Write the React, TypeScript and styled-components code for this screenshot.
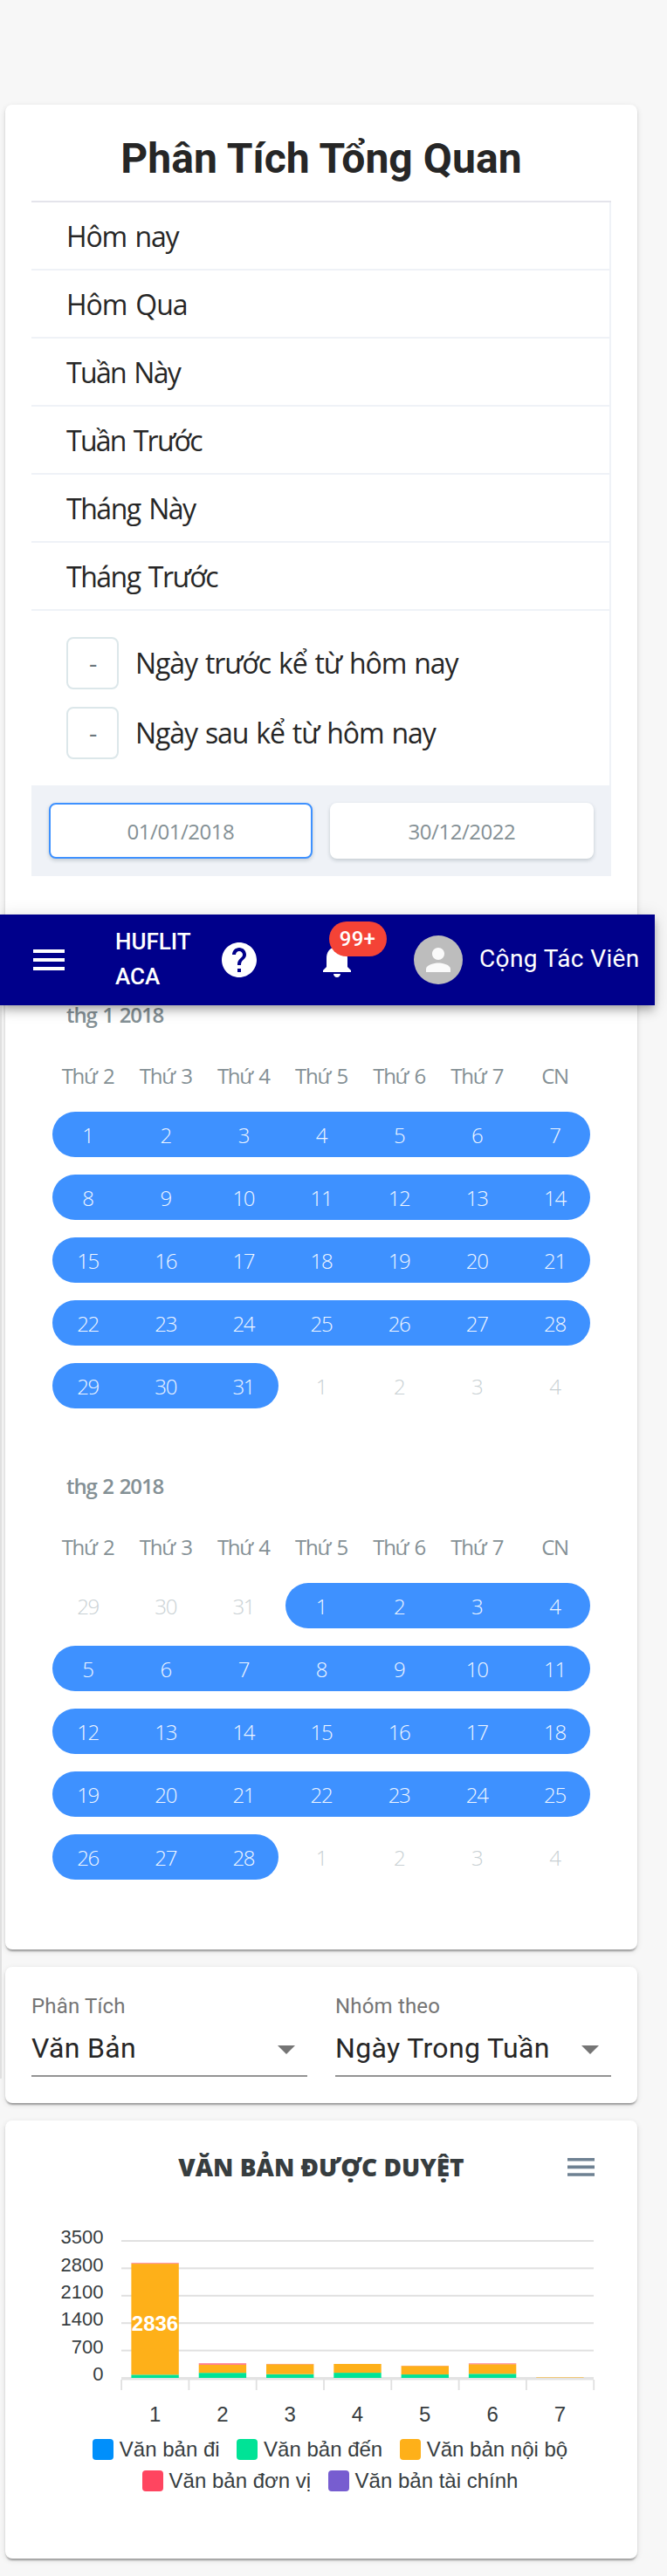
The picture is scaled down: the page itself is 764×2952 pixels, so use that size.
import React from 'react';
import styled, { createGlobalStyle } from 'styled-components';

const Global = createGlobalStyle`
  * { box-sizing: border-box; }
  body { margin: 0; background: #f7f7f7; font-family: Roboto, sans-serif; color: #262626; }
`;

const segoe = `'Open Sans', 'Noto Sans', sans-serif`;

const Page = styled.main`
  position: relative;
  width: 764px;
  height: 2952px;
  padding: 120px 34px 20px 6px;
  display: flex;
  flex-direction: column;
  gap: 20px;
  overflow: hidden;
`;

const Card = styled.section<{ $h: number }>`
  height: ${(p) => p.$h}px;
  flex: none;
  background: #fff;
  border-radius: 8px;
  box-shadow: 0 4px 2px -2px rgba(0, 0, 0, 0.2), 0 2px 2px rgba(0, 0, 0, 0.14), 0 2px 6px rgba(0, 0, 0, 0.12);
`;

const EdgeRail = styled.div`
  position: absolute;
  left: 0;
  top: 1152px;
  width: 2px;
  height: 1230px;
  background: #e0e0e0;
`;

/* ---------- top bar ---------- */

const NavBar = styled.header`
  position: absolute;
  left: 0;
  top: 1048px;
  width: 750px;
  height: 104px;
  padding-left: 32px;
  display: flex;
  align-items: center;
  background: #00008b;
  color: #fff;
  box-shadow: 0 4px 8px -2px rgba(0, 0, 0, 0.2), 0 8px 10px rgba(0, 0, 0, 0.14), 0 2px 20px rgba(0, 0, 0, 0.12);
`;

const Glyph = styled.svg<{ $s?: number }>`
  width: ${(p) => p.$s ?? 48}px;
  height: ${(p) => p.$s ?? 48}px;
  fill: currentColor;
  display: block;
  flex: none;
`;

const Brand = styled.div`
  width: 118px;
  margin-left: 52px;
  padding-bottom: 2px;
  font: 500 26px/40px Roboto, sans-serif;
`;

const BellWrap = styled.div`
  position: relative;
  margin: 0 64px;
`;

const Badge = styled.span`
  position: absolute;
  left: 14.5px;
  top: -20px;
  width: 66px;
  height: 40px;
  border-radius: 20px;
  background: #f44336;
  text-align: center;
  font: 500 24px/40px Roboto, sans-serif;
  letter-spacing: 0.3px;
`;

const Avatar = styled.div`
  width: 56px;
  height: 56px;
  border-radius: 50%;
  background: #bdbdbd;
  color: #fafafa;
  display: grid;
  place-items: center;
`;

const UserName = styled.span`
  margin-left: 19px;
  padding-bottom: 3px;
  font-size: 28px;
  letter-spacing: 0.38px;
  white-space: nowrap;
`;

/* ---------- date range card ---------- */

const Title = styled.h1`
  margin: 0;
  height: 110px;
  padding-top: 14px;
  line-height: 96px;
  font-size: 48px;
  font-weight: 700;
  letter-spacing: 0.07px;
  text-align: center;
`;

const RangePicker = styled.div`
  margin: 0 30px;
  border-top: 2px solid #e4e4eb;
  font-family: ${segoe};
`;

const Presets = styled.div`
  border-right: 2px solid #eff2f7;
`;

const Preset = styled.div<{ $ls: number }>`
  height: 78px;
  padding-left: 40px;
  border-bottom: 2px solid #eff2f7;
  font-size: 32px;
  line-height: 77px;
  letter-spacing: ${(p) => p.$ls}px;
  word-spacing: 2.5px;
`;

const Offsets = styled.div`
  height: 200px;
  padding: 30px 40px;
  display: flex;
  flex-direction: column;
  gap: 20px;
`;

const Offset = styled.label`
  display: flex;
  align-items: center;
  gap: 19px;
  font-size: 32px;
  line-height: 60px;
  letter-spacing: -1.1px;
  word-spacing: 1.8px;
`;

const OffsetBox = styled.span`
  width: 60px;
  height: 60px;
  border: 2px solid #dce7ea;
  border-radius: 8px;
  color: #6b777d;
  font-size: 29px;
  line-height: 55px;
  text-align: center;
`;

const DatePanel = styled.div`
  height: 104px;
  padding: 20px;
  display: flex;
  gap: 20px;
  background: #eff2f7;
`;

const DateInput = styled.div<{ $active?: boolean }>`
  flex: 1;
  border: 2px solid ${(p) => (p.$active ? '#3e91ff' : '#fff')};
  border-radius: 8px;
  background: #fff;
  color: #849095;
  font-size: 24px;
  line-height: 62px;
  letter-spacing: -0.46px;
  text-align: center;
  box-shadow: 0 2px 4px rgba(35, 57, 66, 0.21);
`;

const Months = styled.div`
  padding: 139px 20px 0;
`;

const Month = styled.div`
  height: 540px;
  color: #849095;
  font-size: 24px;
`;

const MonthName = styled.div`
  height: 40px;
  margin-bottom: 26px;
  padding-left: 20px;
  font-weight: 600;
  line-height: 40px;
  letter-spacing: -1.1px;
  word-spacing: 1.5px;
`;

const Week = styled.div<{ $head?: boolean }>`
  display: grid;
  grid-template-columns: repeat(7, 1fr);
  grid-auto-rows: ${(p) => (p.$head ? 48 : 52)}px;
  height: ${(p) => (p.$head ? 48 : 72)}px;
  margin-bottom: ${(p) => (p.$head ? 7 : 0)}px;
  padding: ${(p) => (p.$head ? 0 : 10)}px 0;
  line-height: ${(p) => (p.$head ? 48 : 54)}px;
  letter-spacing: -1.3px;
  word-spacing: 2.5px;
  text-align: center;
`;

const DayCell = styled.span<{ $on: boolean; $start: boolean; $end: boolean }>`
  font-weight: 300;
  color: ${(p) => (p.$on ? '#f0f6ff' : '#c8d0d3')};
  background: ${(p) => (p.$on ? '#3e91ff' : 'transparent')};
  margin-left: ${(p) => (p.$start ? 4 : 0)}px;
  margin-right: ${(p) => (p.$end ? 4 : 0)}px;
  padding-right: ${(p) => (p.$start ? 4 : 0)}px;
  padding-left: ${(p) => (p.$end ? 4 : 0)}px;
  border-radius: ${(p) => `${p.$start ? 26 : 0}px ${p.$end ? 26 : 0}px ${p.$end ? 26 : 0}px ${p.$start ? 26 : 0}px`};
`;

/* ---------- filters card ---------- */

const Filters = styled.div`
  display: grid;
  grid-template-columns: 1fr 1fr;
  gap: 32px;
  padding: 29px 30px 0;
`;

const FieldLabel = styled.div`
  color: #757575;
  font-size: 24px;
  line-height: 32px;
  letter-spacing: 0.17px;
`;

const SelectBox = styled.div`
  height: 65px;
  padding: 8px 7px 7px 0;
  display: flex;
  align-items: center;
  justify-content: space-between;
  border-bottom: 2px solid #949494;
  font-size: 32px;
  line-height: 48px;
  letter-spacing: 0.35px;
  white-space: nowrap;
`;

const Caret = styled.i`
  margin: 4px 7px 0 0;
  border: 10px solid transparent;
  border-top-color: #757575;
  border-bottom: 0;
`;

/* ---------- chart card ---------- */

const ChartHead = styled.div`
  height: 105px;
  padding-right: 49px;
  padding-left: 49px;
  display: grid;
  grid-template-columns: 1fr auto 1fr;
  align-items: center;
  color: #373d3f;
  font: 800 28px ${segoe};
`;

const MenuLines = styled.svg`
  grid-column: 3;
  justify-self: end;
  margin-top: 2px;
  width: 31px;
  height: 21px;
  fill: #6e8192;
`;

const ChartTitle = styled.span`
  grid-column: 2;
`;

const Plot = styled.svg`
  display: block;
  font-family: 'Liberation Sans', Arial, sans-serif;
`;

const Legend = styled.div`
  padding-left: 20px;
  font: 24px/36px 'Liberation Sans', Arial, sans-serif;
  color: #373d3f;
`;

const LegendRow = styled.div`
  display: flex;
  justify-content: center;
  gap: 19.5px;
`;

const LegendItem = styled.span<{ $c: string }>`
  display: flex;
  align-items: center;
  gap: 7px;
  &::before {
    content: '';
    width: 24px;
    height: 24px;
    border-radius: 4px;
    background: ${(p) => p.$c};
  }
`;

const presets: [string, number][] = [
  ['Hôm nay', -1.2],
  ['Hôm Qua', -1],
  ['Tuần Này', -1.65],
  ['Tuần Trước', -1.75],
  ['Tháng Này', -1.45],
  ['Tháng Trước', -1.5],
];

const weekdays = ['Thứ 2', 'Thứ 3', 'Thứ 4', 'Thứ 5', 'Thứ 6', 'Thứ 7', 'CN'];

const months = [
  { name: 'thg 1 2018', lead: 0, prev: 31, days: 31 },
  { name: 'thg 2 2018', lead: 3, prev: 31, days: 28 },
];

const colors = { di: '#008ffb', den: '#00e396', noiBo: '#feb019', donVi: '#ff4560', taiChinh: '#775dd0' };

const bars = [
  { den: 82, noiBo: 2836, donVi: 20 },
  { den: 130, noiBo: 205, donVi: 40 },
  { den: 95, noiBo: 255, donVi: 8 },
  { den: 132, noiBo: 225, donVi: 0 },
  { den: 88, noiBo: 218, donVi: 5 },
  { den: 105, noiBo: 245, donVi: 22 },
  { den: 0, noiBo: 12, donVi: 0 },
];

const legend: [string, string][][] = [
  [['Văn bản đi', colors.di], ['Văn bản đến', colors.den], ['Văn bản nội bộ', colors.noiBo]],
  [['Văn bản đơn vị', colors.donVi], ['Văn bản tài chính', colors.taiChinh]],
];

function Calendar({ name, lead, prev, days }: (typeof months)[number]) {
  const weeks = [0, 1, 2, 3, 4].map((w) => [0, 1, 2, 3, 4, 5, 6].map((d) => w * 7 + d - lead + 1));
  return (
    <Month>
      <MonthName>{name}</MonthName>
      <Week $head>{weekdays.map((d) => <span key={d}>{d}</span>)}</Week>
      {weeks.map((week, w) => (
        <Week key={w}>
          {week.map((n, i) => {
            const on = n >= 1 && n <= days;
            const label = n < 1 ? prev + n : n > days ? n - days : n;
            return (
              <DayCell key={i} $on={on} $start={on && (i === 0 || n === 1)} $end={on && (i === 6 || n === days)}>
                {label}
              </DayCell>
            );
          })}
        </Week>
      ))}
    </Month>
  );
}

function StackedBars() {
  const left = 133;
  const step = 77.3;
  const base = 190;
  const unit = 157 / 3500;
  return (
    <Plot width="724" height="254" viewBox="0 0 724 254">
      {[0, 1, 2, 3, 4, 5].map((i) => (
        <g key={i}>
          <rect x={left} y={32 + i * 31.4} width="541" height="2" fill="#e0e0e0" />
          <text x="112.5" y={36.3 + i * 31.3} fontSize="22" textAnchor="end" fill="#373d3f">{3500 - i * 700}</text>
        </g>
      ))}
      <rect x={left} y="189.5" width="541" height="3" fill="#e3e3e3" />
      {[0, 1, 2, 3, 4, 5, 6, 7].map((i) => (
        <rect key={i} x={left - 0.8 + i * step} y="192" width="1.8" height="12" fill="#e0e0e0" />
      ))}
      {bars.map((b, i) => {
        const x = left + 11.4 + i * step;
        const y1 = base - b.den * unit;
        const y2 = y1 - b.noiBo * unit;
        const y3 = y2 - b.donVi * unit;
        return (
          <g key={i}>
            <rect x={x} y={y1} width="54.4" height={base - y1} fill={colors.den} />
            <rect x={x} y={y2} width="54.4" height={y1 - y2} fill={colors.noiBo} />
            <rect x={x} y={y3} width="54.4" height={y2 - y3} fill={colors.donVi} opacity="0.7" />
            <text x={x + 27.2} y="239.7" fontSize="24" textAnchor="middle" fill="#373d3f">{i + 1}</text>
          </g>
        );
      })}
      <text x="171.5" y="136" fontSize="24" fontWeight="700" textAnchor="middle" fill="#fff">2836</text>
    </Plot>
  );
}

export default function App() {
  return (
    <Page>
      <Global />
      <Card $h={2114}>
        <Title>Phân Tích Tổng Quan</Title>
        <RangePicker>
          <Presets>
            {presets.map(([text, ls]) => <Preset key={text} $ls={ls}>{text}</Preset>)}
            <Offsets>
              <Offset><OffsetBox>-</OffsetBox>Ngày trước kể từ hôm nay</Offset>
              <Offset><OffsetBox>-</OffsetBox>Ngày sau kể từ hôm nay</Offset>
            </Offsets>
          </Presets>
          <DatePanel>
            <DateInput $active>01/01/2018</DateInput>
            <DateInput>30/12/2022</DateInput>
          </DatePanel>
          <Months>{months.map((m) => <Calendar key={m.name} {...m} />)}</Months>
        </RangePicker>
      </Card>

      <Card $h={156}>
        <Filters>
          <div>
            <FieldLabel>Phân Tích</FieldLabel>
            <SelectBox>Văn Bản<Caret /></SelectBox>
          </div>
          <div>
            <FieldLabel>Nhóm theo</FieldLabel>
            <SelectBox>Ngày Trong Tuần<Caret /></SelectBox>
          </div>
        </Filters>
      </Card>

      <Card $h={502}>
        <ChartHead>
          <ChartTitle>VĂN BẢN ĐƯỢC DUYỆT</ChartTitle>
          <MenuLines viewBox="0 0 31 21">
            <path d="M0 0h31v3.6H0zM0 8.6h31v3.6H0zM0 17.2h31v3.6H0z" />
          </MenuLines>
        </ChartHead>
        <StackedBars />
        <Legend>
          {legend.map((row, i) => (
            <LegendRow key={i}>
              {row.map(([text, c]) => <LegendItem key={text} $c={c}>{text}</LegendItem>)}
            </LegendRow>
          ))}
        </Legend>
      </Card>

      <EdgeRail />
      <NavBar>
        <Glyph viewBox="0 0 24 24"><path d="M3 18h18v-2H3v2zm0-5h18v-2H3v2zm0-7v2h18V6H3z" /></Glyph>
        <Brand>HUFLIT<br />ACA</Brand>
        <Glyph viewBox="0 0 24 24">
          <path d="M12 2C6.48 2 2 6.48 2 12s4.48 10 10 10 10-4.48 10-10S17.52 2 12 2zm1 17h-2v-2h2v2zm2.07-7.75l-.9.92C13.45 12.9 13 13.5 13 15h-2v-.5c0-1.1.45-2.1 1.17-2.83l1.24-1.26c.37-.36.59-.86.59-1.41 0-1.1-.9-2-2-2s-2 .9-2 2H8c0-2.21 1.79-4 4-4s4 1.79 4 4c0 .88-.36 1.68-.93 2.25z" />
        </Glyph>
        <BellWrap>
          <Glyph viewBox="0 0 24 24">
            <path d="M12 22c1.1 0 2-.9 2-2h-4c0 1.1.89 2 2 2zm6-6v-5c0-3.07-1.64-5.64-4.5-6.32V4c0-.83-.67-1.5-1.5-1.5s-1.5.67-1.5 1.5v.68C7.63 5.36 6 7.92 6 11v5l-2 2v1h16v-1l-2-2z" />
          </Glyph>
          <Badge>99+</Badge>
        </BellWrap>
        <Avatar>
          <Glyph $s={42} viewBox="0 0 24 24">
            <path d="M12 12c2.21 0 4-1.79 4-4s-1.79-4-4-4-4 1.79-4 4 1.79 4 4 4zm0 2c-2.67 0-8 1.34-8 4v2h16v-2c0-2.66-5.33-4-8-4z" />
          </Glyph>
        </Avatar>
        <UserName>Cộng Tác Viên</UserName>
      </NavBar>
    </Page>
  );
}
